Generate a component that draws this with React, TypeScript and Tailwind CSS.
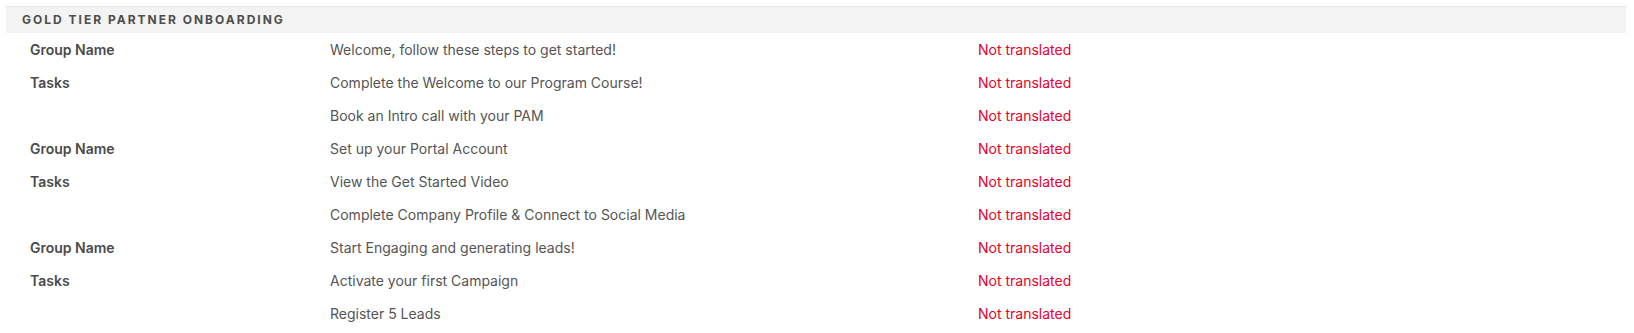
const rows = [
  { label: "Group Name", text: "Welcome, follow these steps to get started!" },
  { label: "Tasks", text: "Complete the Welcome to our Program Course!" },
  { label: "", text: "Book an Intro call with your PAM" },
  { label: "Group Name", text: "Set up your Portal Account" },
  { label: "Tasks", text: "View the Get Started Video" },
  { label: "", text: "Complete Company Profile & Connect to Social Media" },
  { label: "Group Name", text: "Start Engaging and generating leads!" },
  { label: "Tasks", text: "Activate your first Campaign" },
  { label: "", text: "Register 5 Leads" },
];

export default function App() {
  return (
    <div className="min-h-[333px] bg-white px-[6px] pt-[6px] font-['Inter','Noto_Sans',sans-serif] text-[14px]">
      <div className="w-[1620px] border-t border-[#e2e2e2] bg-[#f3f3f3] h-[27px] flex items-center pl-[16px]">
        <span className="text-[12px] font-bold tracking-[2px] text-[#4d4d4d] uppercase">
          Gold Tier Partner Onboarding
        </span>
      </div>
      <div className="pl-[24px]">
        {rows.map((row, i) => (
          <div key={i} className="grid grid-cols-[300px_648px_1fr] h-[33px] items-center">
            <span className="font-semibold text-[#4a4a4a]">{row.label}</span>
            <span className="text-[#555555]">{row.text}</span>
            <span className="text-[#e8002a]">Not translated</span>
          </div>
        ))}
      </div>
    </div>
  );
}
